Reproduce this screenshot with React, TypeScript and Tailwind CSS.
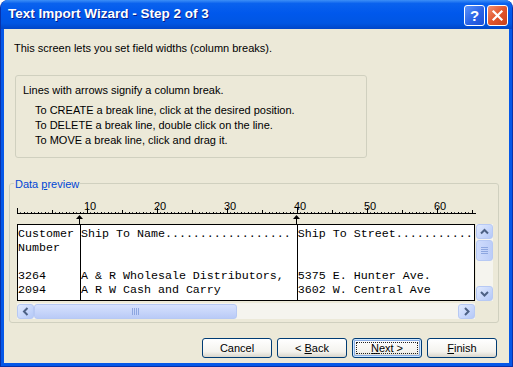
import React from 'react';

const sans = "font-['Liberation_Sans',Arial,sans-serif]";

const rows = [
  'Customer Ship To Name' + '.'.repeat(18) + ' Ship To Street' + '.'.repeat(11),
  'Number',
  '',
  '3264     A & R Wholesale Distributors,  5375 E. Hunter Ave.',
  '2094     A R W Cash and Carry           3602 W. Central Ave',
];

const breaks = [9, 40];
const CH = 7;

const arrows: Record<string, string> = {
  up: 'M4 9.5l3.5-3.5 3.5 3.5',
  down: 'M4 6l3.5 3.5 3.5-3.5',
  left: 'M9.5 4l-3.5 3.5 3.5 3.5',
  right: 'M6 4l3.5 3.5-3.5 3.5',
};

function ScrollBtn({ dir }: { dir: 'up' | 'down' | 'left' | 'right' }) {
  return (
    <div className="flex h-[15px] w-[17px] shrink-0 items-center justify-center rounded-[3px] border border-[#B7C9F4] bg-[linear-gradient(135deg,#E1EAFE_0%,#C6D6FB_60%,#B4C8F7_100%)]">
      <svg width="15" height="15" viewBox="0 0 15 15">
        <path d={arrows[dir]} fill="none" stroke="#4D6185" strokeWidth="2" />
      </svg>
    </div>
  );
}

function Ruler() {
  const ticks = Array.from({ length: 66 }, (_, n) => n);
  return (
    <div className="relative h-[28px] w-[459px]">
      <svg width="459" height="28" className="absolute left-0 top-0">
        <rect x="0" y="17" width="459" height="1" fill="#000" />
        {ticks.map((n) => {
          const h = n % 10 === 0 ? 5 : n % 5 === 0 ? 3 : 1;
          return <rect key={n} x={n * CH} y={17 - h} width="1" height={h} fill="#000" />;
        })}
        {ticks.filter((n) => n < 65).map((n) => (
          <rect key={'d' + n} x={n * CH + 3} y="16" width="1" height="1" fill="#555" />
        ))}
        {breaks.map((b) => {
          const x = b * CH - 1;
          return (
            <g key={b}>
              <polygon points={`${x - 3},23 ${x + 0.5},19 ${x + 4},23`} fill="#000" />
              <rect x={x} y="22" width="1" height="6" fill="#000" />
            </g>
          );
        })}
      </svg>
      {[10, 20, 30, 40, 50, 60].map((n) => (
        <span
          key={n}
          className={`absolute top-[5px] text-[11px] leading-[11px] text-black ${sans}`}
          style={{ left: n * CH - 3 }}
        >
          {n}
        </span>
      ))}
    </div>
  );
}

function Button({ label, u, def }: { label: [string, string, string]; u?: boolean; def?: boolean }) {
  return (
    <div
      className={`relative flex h-[20px] w-[70px] items-center justify-center rounded-[3px] border border-[#003C74] bg-[linear-gradient(to_bottom,#FFFFFF_0%,#F4F3EE_70%,#D9D6CB_100%)] text-[11px] text-black ${sans} ${
        def ? 'shadow-[inset_0_0_0_1px_#CEE7FF,inset_0_0_0_2px_#89ADE4]' : ''
      }`}
    >
      {def && <div className="absolute inset-[3px] border border-dotted border-[#222]" />}
      <span>
        {label[0]}
        {u ? <span className="underline">{label[1]}</span> : label[1]}
        {label[2]}
      </span>
    </div>
  );
}

export default function App() {
  return (
    <div className="h-[367px] w-[513px] bg-white">
      <div className="flex h-full flex-col overflow-hidden rounded-t-[8px] border-x border-b border-[#0831A9] bg-[#0558E8]">
        {/* title bar */}
        <div className="flex h-[29px] shrink-0 items-center justify-between bg-[linear-gradient(to_bottom,#3D8FF7_0%,#0A62EE_12%,#0058EC_45%,#0056E3_80%,#0046C8_100%)] pl-[7px] pr-[4px]">
          <span className={`text-[13.5px] font-bold text-white [text-shadow:1px_1px_#0A1E8A] ${sans}`}>
            Text Import Wizard - Step 2 of 3
          </span>
          <div className="flex gap-[2px] pt-[1px]">
            <div className="flex h-[21px] w-[21px] items-center justify-center rounded-[3px] border border-white bg-[linear-gradient(135deg,#5C93FA_0%,#2A63E6_55%,#1B4FD6_100%)]">
              <span className={`text-[15px] font-bold leading-none text-white ${sans}`}>?</span>
            </div>
            <div className="flex h-[21px] w-[21px] items-center justify-center rounded-[3px] border border-white bg-[linear-gradient(135deg,#F09070_0%,#E2552C_50%,#C8401C_100%)]">
              <svg width="13" height="13" viewBox="0 0 13 13">
                <path d="M2.5 2.5l8 8M10.5 2.5l-8 8" stroke="#fff" strokeWidth="2.2" strokeLinecap="square" />
              </svg>
            </div>
          </div>
        </div>

        {/* client area */}
        <div className={`mx-[3px] mb-[3px] flex flex-1 flex-col bg-[#ECE9D8] text-[11px] text-black ${sans}`}>
          <p className="ml-[10px] mt-[13px] h-[13px] leading-[13px]">This screen lets you set field widths (column breaks).</p>

          <div className="ml-[11px] mt-[20px] h-[83px] w-[352px] rounded-[3px] border border-[#D0D0BF] pl-[7px] pt-[7px]">
            <p className="leading-[15px]">Lines with arrows signify a column break.</p>
            <div className="ml-[12px] mt-[5px] leading-[15px]">
              <p>To CREATE a break line, click at the desired position.</p>
              <p>To DELETE a break line, double click on the line.</p>
              <p>To MOVE a break line, click and drag it.</p>
            </div>
          </div>

          <div className="relative ml-[5px] mt-[25px] h-[140px] w-[490px] rounded-[3px] border border-[#D0D0BF] pl-[7px] pt-[12px]">
            <span className="absolute left-[4px] top-[-8px] bg-[#ECE9D8] px-[1px] text-[#0046D5]">
              Data <span className="underline">p</span>review
            </span>
            <Ruler />
            <div className="flex gap-[1px]">
              <div className="relative h-[77px] w-[458px] overflow-hidden border border-black bg-white pt-[2px]">
                {breaks.map((b) => (
                  <div key={b} className="absolute bottom-0 top-0 w-px bg-black" style={{ left: b * CH - 1 }} />
                ))}
                <div className="font-['Liberation_Mono','Courier_New',monospace] text-[11.67px] leading-[14px]">
                  {rows.map((r, i) => (
                    <div key={i} className="h-[14px] whitespace-pre">
                      {r}
                    </div>
                  ))}
                </div>
              </div>
              <div className="flex h-[77px] w-[17px] flex-col bg-[#F5F4EE]">
                <ScrollBtn dir="up" />
                <div className="mt-[1px] flex h-[21px] w-[17px] flex-col items-center justify-center gap-[1px] rounded-[3px] border border-[#B7C9F4] bg-[linear-gradient(90deg,#CFDCFD,#BCCDF8)]">
                  {[0, 1, 2, 3].map((i) => (
                    <div key={i} className="h-px w-[7px] bg-[#8DA6E0]" />
                  ))}
                </div>
                <div className="flex-1" />
                <ScrollBtn dir="down" />
              </div>
            </div>
            <div className="mt-[2px] flex h-[16px] w-[458px] items-center bg-[#F5F4EE]">
              <div className="w-[16px]">
                <ScrollBtn dir="left" />
              </div>
              <div className="ml-[1px] flex h-[15px] w-[203px] items-center justify-center gap-[1px] rounded-[3px] border border-[#B7C9F4] bg-[linear-gradient(to_bottom,#D6E1FD,#BACBF7)]">
                {[0, 1, 2, 3].map((i) => (
                  <div key={i} className="h-[7px] w-px bg-[#8DA6E0]" />
                ))}
              </div>
              <div className="flex-1" />
              <ScrollBtn dir="right" />
            </div>
          </div>

          <div className="mt-[15px] flex justify-end gap-[5px] pr-[12px]">
            <Button label={['', 'Cancel', '']} />
            <Button label={['< ', 'B', 'ack']} u />
            <Button label={['', 'N', 'ext >']} u def />
            <Button label={['', 'F', 'inish']} u />
          </div>
        </div>
      </div>
    </div>
  );
}
